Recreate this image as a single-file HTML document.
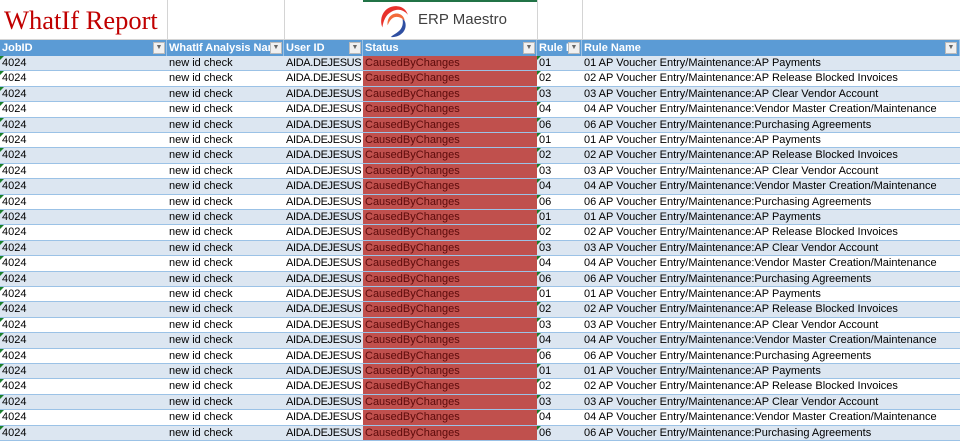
<!DOCTYPE html>
<html><head><meta charset="utf-8"><style>
*{margin:0;padding:0;box-sizing:border-box}
body{width:960px;height:435px;overflow:hidden;background:#fff;font-family:"Liberation Sans",Arial,sans-serif;font-size:11px;position:relative}
.top{position:absolute;left:0;top:0;width:960px;height:40px;border-bottom:1px solid #d4d4d4}
.vl{position:absolute;top:0;height:40px;width:1px;background:#d4d4d4}
.title{position:absolute;left:4px;top:5px;font-family:"Liberation Serif",serif;font-size:26.5px;color:#c00000}
.logo{position:absolute;left:376px;top:2px}
.lt{position:absolute;left:418px;top:11px;font-size:15px;color:#404040}
.row{position:absolute;left:0;width:960px;height:15.4px;border-bottom:1px solid #9bc2e6;line-height:15px;white-space:nowrap}
.row span{position:absolute;top:0;height:100%;padding-left:2px;overflow:hidden}
.hd{top:40px;height:16px;background:#5b9bd5;color:#fff;font-weight:bold;border-bottom:none;line-height:17px}
.hd span{border-right:1px solid #9bc2e6}
.b{background:#dce6f1}
.st{background:#c0504d;color:#5c0a0a}
.c1{left:0;width:167px}.c2{left:167px;width:117px}.c3{left:284px;width:79px;letter-spacing:-0.35px}.c4{left:363px;width:174px}.c5{left:537px;width:45px}.c6{left:582px;width:378px}
.hd .c3{letter-spacing:0}
.f{position:absolute;top:2px;width:12px;height:12px;background:#f0f0f0;border:1px solid #bbb;color:#666;font-size:7px;line-height:10px;text-align:center;font-weight:normal}
.tri{position:absolute;left:0;top:0;width:0;height:0;border-top:4px solid #1a7f2a;border-right:4px solid transparent}
</style></head><body>
<div class="top">
<div class="vl" style="left:167px"></div><div class="vl" style="left:284px"></div><div class="vl" style="left:363px;background:#217346;top:0;height:2px;width:174px"></div><div class="vl" style="left:537px"></div><div class="vl" style="left:582px"></div>
<div class="title">WhatIf Report</div>
<svg class="logo" width="36" height="36" viewBox="0 0 32 34">
<path d="M5 24 C1 14 8 3 19 4 C24 4 28 8 29 12 C25 7 19 6 14 9 C8 12 6 18 5 24Z" fill="#e8322c"/>
<path d="M10 22 C9 15 14 10 20 11 C24 12 26 15 26 18 C23 14 18 13 15 15 C12 17 11 20 10 22Z" fill="#f26b3a"/>
<path d="M13 33 C20 34 27 29 27 22 C27 19 26 17 24 16 C25 20 24 25 20 28 C18 30 15 31 13 33Z" fill="#2f4fa2"/>
</svg>
<div class="lt">ERP Maestro</div>
</div>
<div class="row hd">
<span class="c1">JobID<i class="f" style="left:153px">▼</i></span>
<span class="c2">WhatIf Analysis Nam<i class="f" style="left:103px">▼</i></span>
<span class="c3">User ID<i class="f" style="left:65px">▼</i></span>
<span class="c4">Status<i class="f" style="left:160px">▼</i></span>
<span class="c5">Rule I<i class="f" style="left:31px">▼</i></span>
<span class="c6">Rule Name<i class="f" style="left:363px">▼</i></span>
</div>
<div id="rows"></div>
<script>
var r=[["01","01 AP Voucher Entry/Maintenance:AP Payments"],["02","02 AP Voucher Entry/Maintenance:AP Release Blocked Invoices"],["03","03 AP Voucher Entry/Maintenance:AP Clear Vendor Account"],["04","04 AP Voucher Entry/Maintenance:Vendor Master Creation/Maintenance"],["06","06 AP Voucher Entry/Maintenance:Purchasing Agreements"]];
var h="";
for(var i=0;i<25;i++){var x=r[i%5];var t=56+i*15.4;
h+='<div class="row'+(i%2==0?' b':'')+'" style="top:'+t+'px"><span class="c1"><i class="tri"></i>4024</span><span class="c2">new id check</span><span class="c3">AIDA.DEJESUS</span><span class="c4 st">CausedByChanges</span><span class="c5"><i class="tri"></i>'+x[0]+'</span><span class="c6">'+x[1]+'</span></div>';}
document.getElementById("rows").innerHTML=h;
</script>
</body></html>
